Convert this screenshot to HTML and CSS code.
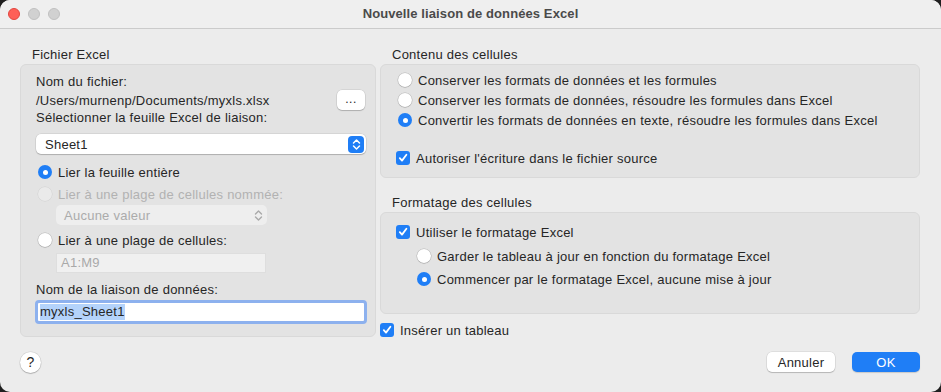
FILE: index.html
```html
<!DOCTYPE html>
<html lang="fr">
<head>
<meta charset="utf-8">
<title>Nouvelle liaison de données Excel</title>
<link rel="stylesheet" href="styles.css">
</head>
<body>
<div class="window">
  <div class="titlebar">
    <div class="lights">
      <span class="light red"></span>
      <span class="light"></span>
      <span class="light"></span>
    </div>
    <div class="title">Nouvelle liaison de données Excel</div>
  </div>
  <div class="content">
    <div class="columns">
      <section class="col col-left">
        <div class="group-label">Fichier Excel</div>
        <div class="group left-group">
          <div class="line">Nom du fichier:</div>
          <div class="path-row">
            <span>/Users/murnenp/Documents/myxls.xlsx</span>
            <span class="btn small-btn">...</span>
          </div>
          <div class="line">Sélectionner la feuille Excel de liaison:</div>
          <div class="select">
            <span>Sheet1</span>
            <span class="stepper">
              <svg width="9" height="13" viewBox="0 0 9 13"><path d="M1.5 5 L4.5 2 L7.5 5 M1.5 8 L4.5 11 L7.5 8" fill="none" stroke="#fff" stroke-width="1.5" stroke-linecap="round" stroke-linejoin="round"/></svg>
            </span>
          </div>
          <div class="opt opt-lier"><span class="radio on"></span><span>Lier la feuille entière</span></div>
          <div class="opt opt-nommee disabled"><span class="radio dis"></span><span>Lier à une plage de cellules nommée:</span></div>
          <div class="popup-dis">
            <span>Aucune valeur</span>
            <svg width="9" height="13" viewBox="0 0 9 13"><path d="M1.5 5 L4.5 2 L7.5 5 M1.5 8 L4.5 11 L7.5 8" fill="none" stroke="#a9a9a9" stroke-width="1.4" stroke-linecap="round" stroke-linejoin="round"/></svg>
          </div>
          <div class="opt opt-plage"><span class="radio"></span><span>Lier à une plage de cellules:</span></div>
          <div class="field-dis">A1:M9</div>
          <div class="line line-nom">Nom de la liaison de données:</div>
          <div class="textfield"><span class="sel">myxls_Sheet1</span></div>
        </div>
      </section>
      <section class="col col-right">
        <div class="group-label">Contenu des cellules</div>
        <div class="group g-contenu">
          <div class="opt"><span class="radio"></span><span>Conserver les formats de données et les formules</span></div>
          <div class="opt"><span class="radio"></span><span>Conserver les formats de données, résoudre les formules dans Excel</span></div>
          <div class="opt"><span class="radio on"></span><span>Convertir les formats de données en texte, résoudre les formules dans Excel</span></div>
          <div class="opt chk-row chk-auto"><span class="check"><svg width="10" height="10" viewBox="0 0 10 10"><path d="M1.8 5.2 L4 7.6 L8.4 1.8" fill="none" stroke="#fff" stroke-width="1.8" stroke-linecap="round" stroke-linejoin="round"/></svg></span><span>Autoriser l'écriture dans le fichier source</span></div>
        </div>
        <div class="group-label label-format">Formatage des cellules</div>
        <div class="group g-format">
          <div class="opt chk-row"><span class="check"><svg width="10" height="10" viewBox="0 0 10 10"><path d="M1.8 5.2 L4 7.6 L8.4 1.8" fill="none" stroke="#fff" stroke-width="1.8" stroke-linecap="round" stroke-linejoin="round"/></svg></span><span>Utiliser le formatage Excel</span></div>
          <div class="opt sub opt-garder"><span class="radio"></span><span>Garder le tableau à jour en fonction du formatage Excel</span></div>
          <div class="opt sub opt-commencer"><span class="radio on"></span><span>Commencer par le formatage Excel, aucune mise à jour</span></div>
        </div>
        <div class="opt chk-row chk-insert"><span class="check"><svg width="10" height="10" viewBox="0 0 10 10"><path d="M1.8 5.2 L4 7.6 L8.4 1.8" fill="none" stroke="#fff" stroke-width="1.8" stroke-linecap="round" stroke-linejoin="round"/></svg></span><span>Insérer un tableau</span></div>
      </section>
    </div>
    <div class="footer">
      <span class="help">?</span>
      <div class="actions">
        <span class="btn action">Annuler</span>
        <span class="btn action primary">OK</span>
      </div>
    </div>
  </div>
</div>
</body>
</html>
```

FILE: styles.css
```css
* { box-sizing: border-box; }
html, body { margin: 0; padding: 0; }
body {
  background: #1f1f1f;
  font-family: "Liberation Sans", Arial, sans-serif;
  font-size: 13px;
  letter-spacing: 0.25px;
  color: #262626;
}
.window {
  width: 941px;
  height: 392px;
  background: #ececec;
  border-radius: 10px;
  overflow: hidden;
  display: flex;
  flex-direction: column;
}
.titlebar {
  height: 29px;
  flex: none;
  background: #efefef;
  border-bottom: 1px solid #cbcbcb;
  display: flex;
  align-items: center;
  justify-content: center;
  position: relative;
}
.lights {
  position: absolute;
  left: 8px;
  top: 8px;
  display: flex;
  gap: 8px;
}
.light {
  width: 12px;
  height: 12px;
  border-radius: 50%;
  background: #d1d1d1;
  border: 1px solid #c0c0c0;
}
.light.red { background: #fe5f57; border-color: #e2463f; }
.title {
  font-weight: 700;
  font-size: 13px;
  letter-spacing: 0.1px;
  color: #4a4a4a;
  margin-top: -1px;
}
.content {
  flex: 1;
  display: flex;
  flex-direction: column;
  padding: 0 21px 0 20px;
}
.columns {
  display: flex;
  gap: 4px;
}
.col { padding-top: 18px; display: flex; flex-direction: column; }
.col-left { width: 356px; }
.col-right { width: 541px; }
.group-label {
  line-height: 16px;
  height: 16px;
  padding-left: 12px;
  margin-bottom: 1px;
}
.group {
  background: #e3e3e3;
  border: 1px solid #d9d9d9;
  border-radius: 6px;
}
.left-group {
  padding: 9px 10px 12px 15px;
  display: flex;
  flex-direction: column;
}
.line { line-height: 16px; height: 16px; }
.path-row {
  height: 20px;
  display: flex;
  align-items: center;
  justify-content: space-between;
}
.btn {
  display: inline-flex;
  align-items: center;
  justify-content: center;
  background: #fff;
  border-radius: 5px;
  box-shadow: 0 0 0 0.5px rgba(0,0,0,0.12), 0 1px 1px rgba(0,0,0,0.18);
  color: #262626;
}
.small-btn {
  width: 28px;
  height: 20px;
  font-size: 12px;
  padding-bottom: 3px;
  letter-spacing: 0.5px;
}
.select {
  margin-top: 8px;
  height: 20px;
  width: 330px;
  background: #fff;
  border-radius: 5px;
  box-shadow: 0 0 0 0.5px rgba(0,0,0,0.12), 0 1px 1px rgba(0,0,0,0.18);
  display: flex;
  align-items: center;
  justify-content: space-between;
  padding: 0 2px 0 9px;
}
.stepper {
  width: 16px;
  height: 17px;
  background: #1f7ef6;
  border-radius: 4px;
  display: flex;
  align-items: center;
  justify-content: center;
}
.opt {
  display: flex;
  align-items: center;
  height: 20px;
  gap: 6px;
  white-space: nowrap;
}
.radio {
  width: 14px;
  height: 14px;
  border-radius: 50%;
  background: #fff;
  box-shadow: 0 0 0 0.5px rgba(0,0,0,0.18), 0 0.5px 1px rgba(0,0,0,0.2);
  flex: none;
  position: relative;
}
.radio.on { background: #1f7ef6; box-shadow: none; }
.radio.on::after {
  content: "";
  position: absolute;
  left: 4.5px;
  top: 4.5px;
  width: 5px;
  height: 5px;
  border-radius: 50%;
  background: #fff;
}
.radio.dis { background: #eaeaea; box-shadow: 0 0 0 0.5px rgba(0,0,0,0.08); }
.disabled { color: #b2b2b2; }
.left-group .opt { padding-left: 2px; }
.opt-lier { margin-top: 8px; }
.opt-nommee { margin-top: 2px; }
.popup-dis {
  margin-top: 1px;
  margin-left: 20px;
  width: 211px;
  height: 20px;
  border-radius: 5px;
  background: #eeeeee;
  color: #ababab;
  display: flex;
  align-items: center;
  justify-content: space-between;
  padding: 0 4px 0 8px;
}
.opt-plage { margin-top: 5px; }
.field-dis {
  margin-top: 3px;
  margin-left: 20px;
  width: 210px;
  height: 20px;
  background: #f0f0f0;
  border: 1px solid #dedede;
  color: #a9a9a9;
  line-height: 18px;
  padding-left: 4px;
}
.line-nom { margin-top: 9px; }
.textfield {
  margin-top: 2px;
  width: 332px;
  margin-left: -1px;
  height: 24px;
  background: #fff;
  border: 3px solid #8db1ee;
  border-radius: 4px;
  display: flex;
  align-items: center;
  padding-left: 2px;
}
.sel { background: #b4d3fb; line-height: 16px; }
.g-contenu { padding: 5px 10px 9px 17px; }
.check {
  width: 14px;
  height: 14px;
  border-radius: 3px;
  background: #1f7ef6;
  display: flex;
  align-items: center;
  justify-content: center;
  flex: none;
}
.chk-row { margin-left: -2px; }
.chk-auto { margin-top: 18px; }
.label-format { margin-top: 17px; }
.g-format { padding: 9px 10px 24px 17px; }
.sub { margin-left: 19px; }
.opt-garder { margin-top: 4px; }
.opt-commencer { margin-top: 3px; }
.chk-insert { margin-top: 6px; margin-left: 0; }
.footer {
  margin-top: auto;
  padding-bottom: 19px;
  display: flex;
  align-items: center;
  justify-content: space-between;
  height: 41px;
}
.help {
  width: 21px;
  height: 21px;
  border-radius: 50%;
  background: #fff;
  box-shadow: 0 0 0 0.5px rgba(0,0,0,0.12), 0 1px 1px rgba(0,0,0,0.2);
  display: flex;
  align-items: center;
  justify-content: center;
  font-size: 14px;
  letter-spacing: 0;
}
.actions { display: flex; gap: 17px; }
.action { width: 68px; height: 20px; }
.primary { background: #1f7ef6; color: #fff; box-shadow: 0 1px 1px rgba(0,0,0,0.15); }
```
